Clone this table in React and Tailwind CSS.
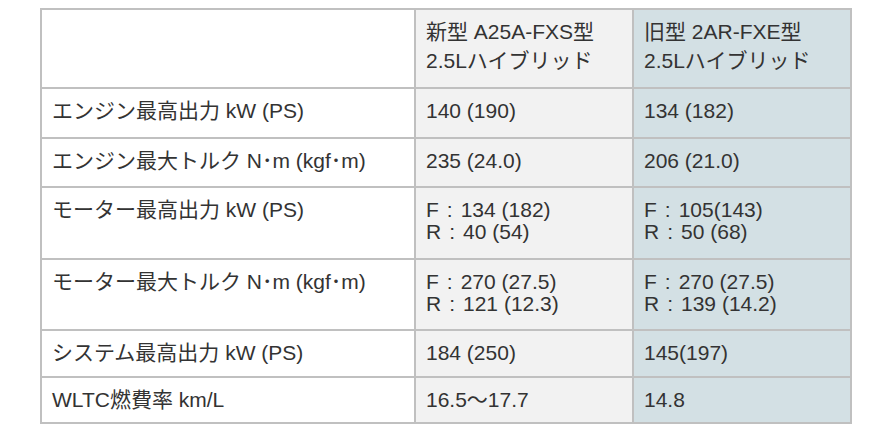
import React from "react";

const rows = [
    { label: "エンジン最高出力 kW (PS)", a: ["140 (190)"], b: ["134 (182)"], h: "h-[48px]" },
    { label: "エンジン最大トルク N･m (kgf･m)", a: ["235 (24.0)"], b: ["206 (21.0)"], h: "h-[47px]" },
    { label: "モーター最高出力 kW (PS)", a: ["F : 134 (182)", "R : 40 (54)"], b: ["F : 105(143)", "R : 50 (68)"], h: "h-[70px]" },
    { label: "モーター最大トルク N･m (kgf･m)", a: ["F : 270 (27.5)", "R : 121 (12.3)"], b: ["F : 270 (27.5)", "R : 139 (14.2)"], h: "h-[69px]" },
    { label: "システム最高出力 kW (PS)", a: ["184 (250)"], b: ["145(197)"], h: "h-[45px]" },
    { label: "WLTC燃費率 km/L", a: ["16.5〜17.7"], b: ["14.8"], h: "h-[44px]" },
];

function Line({ text }) {
    const parts = text.split(" : ");
    if (parts.length < 2) return <div>{text}</div>;
    return (
        <div>
            {parts[0]}
            <span className="mx-[8px]">:</span>
            {parts[1]}
        </div>
    );
}

function Cell({ lines, className }) {
    return (
        <div className={"pl-[10px] pt-[11px] leading-[22px] " + className}>
            {lines.map((l, i) => (
                <Line key={i} text={l} />
            ))}
        </div>
    );
}

export default function App() {
    return (
        <div className="w-[870px] h-[445px] bg-white pt-[8px] pl-[40px] text-[21px] text-[#333]"
            style={{ fontFamily: '"Liberation Sans", "Noto Sans CJK JP", sans-serif' }}>
            <div className="grid grid-cols-[372px_216px_216px] gap-[2px] p-[2px] bg-[#c0c0c0] w-[812px]">
                {/* header */}
                <div className="bg-white h-[77px]"></div>
                <div className="bg-[#f2f2f2] pl-[10px] pt-[7px] leading-[29px]">
                    <div>新型 A25A-FXS型</div>
                    <div>2.5Lハイブリッド</div>
                </div>
                <div className="bg-[#d3e0e4] pl-[10px] pt-[7px] leading-[29px]">
                    <div>旧型 2AR-FXE型</div>
                    <div>2.5Lハイブリッド</div>
                </div>

                {rows.map((r) => (
                    <React.Fragment key={r.label}>
                        <Cell lines={[r.label]} className={"bg-white " + r.h} />
                        <Cell lines={r.a} className="bg-[#f2f2f2]" />
                        <Cell lines={r.b} className="bg-[#d3e0e4]" />
                    </React.Fragment>
                ))}
            </div>
        </div>
    );
}
